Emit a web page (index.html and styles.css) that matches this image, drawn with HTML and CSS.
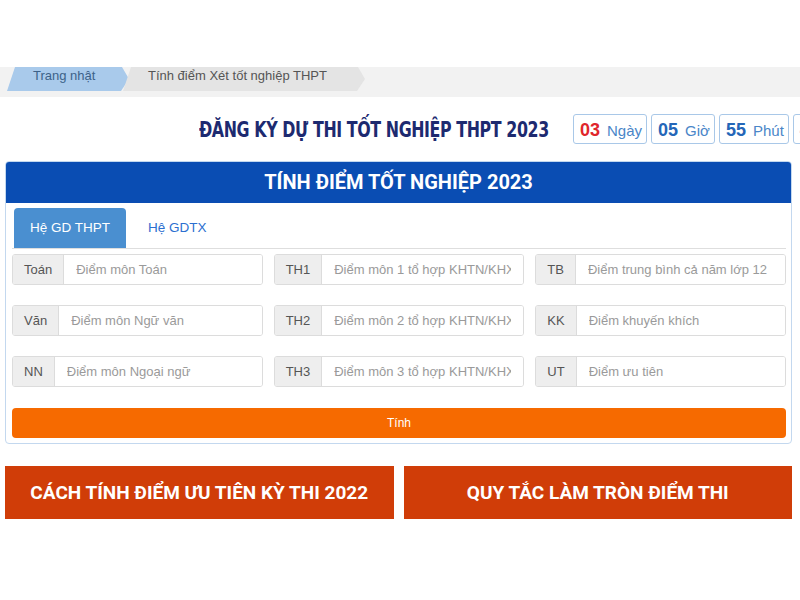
FILE: index.html
```html
<!DOCTYPE html>
<html lang="vi">
  <head>
    <meta charset="UTF-8" />
    <meta name="viewport" content="width=device-width, initial-scale=1.0" />
    <title>Tính điểm Xét tốt nghiệp THPT</title>
    <link rel="stylesheet" href="styles.css">
  </head>
  <body>
    <div class="breadcrumb">
      <a class="crumb crumb-home" href="#">Trang nhật</a>
      <a class="crumb" href="#">Tính điểm Xét tốt nghiệp THPT</a>
    </div>

    <div class="page">
      <div class="heading">
        <h2 class="heading-title">ĐĂNG KÝ DỰ THI TỐT NGHIỆP THPT 2023</h2>
        <div class="countdown">
          <span class="count-box"><b class="count-num count-red">03</b>Ngày</span>
          <span class="count-box"><b class="count-num">05</b>Giờ</span>
          <span class="count-box"><b class="count-num">55</b>Phút</span>
          <span class="count-box"><b class="count-num">42</b>Giây</span>
        </div>
      </div>

      <div class="calc-panel">
        <div class="calc-head">TÍNH ĐIỂM TỐT NGHIỆP 2023</div>

        <div class="calc-body">
          <ul class="tabs">
            <li class="tab active">Hệ GD THPT</li>
            <li class="tab">Hệ GDTX</li>
          </ul>

          <div class="score-grid">
            <div class="input-group">
              <span class="addon">Toán</span>
              <input type="text" placeholder="Điểm môn Toán">
            </div>
            <div class="input-group">
              <span class="addon">TH1</span>
              <input type="text" placeholder="Điểm môn 1 tổ hợp KHTN/KHXH">
            </div>
            <div class="input-group">
              <span class="addon">TB</span>
              <input type="text" placeholder="Điểm trung bình cả năm lớp 12">
            </div>

            <div class="input-group">
              <span class="addon">Văn</span>
              <input type="text" placeholder="Điểm môn Ngữ văn">
            </div>
            <div class="input-group">
              <span class="addon">TH2</span>
              <input type="text" placeholder="Điểm môn 2 tổ hợp KHTN/KHXH">
            </div>
            <div class="input-group">
              <span class="addon">KK</span>
              <input type="text" placeholder="Điểm khuyến khích">
            </div>

            <div class="input-group">
              <span class="addon">NN</span>
              <input type="text" placeholder="Điểm môn Ngoại ngữ">
            </div>
            <div class="input-group">
              <span class="addon">TH3</span>
              <input type="text" placeholder="Điểm môn 3 tổ hợp KHTN/KHXH">
            </div>
            <div class="input-group">
              <span class="addon">UT</span>
              <input type="text" placeholder="Điểm ưu tiên">
            </div>
          </div>

          <button class="btn-calc">Tính</button>
        </div>
      </div>

      <div class="links">
        <a class="link-btn" href="#">CÁCH TÍNH ĐIỂM ƯU TIÊN KỲ THI 2022</a>
        <a class="link-btn" href="#">QUY TẮC LÀM TRÒN ĐIỂM THI</a>
      </div>
    </div>
  </body>
</html>
```

FILE: styles.css
```css
* {
  box-sizing: border-box;
}

body {
  margin: 0;
  background-color: #fff;
  font-family: 'Liberation Sans', Arial, sans-serif;
  overflow: hidden;
}

/* breadcrumb */
.breadcrumb {
  display: flex;
  margin-top: 67px;
  height: 30px;
  background-color: #f2f2f2;
}

.crumb {
  display: block;
  height: 24px;
  padding: 1px 0 0 26px;
  font-size: 13px;
  line-height: 15px;
  color: #555;
  text-decoration: none;
  background-color: #e4e4e4;
  clip-path: polygon(8px 0, calc(100% - 7px) 0, 100% 50%, calc(100% - 8px) 100%, 0 100%);
}

.crumb-home {
  width: 122px;
  margin-left: 7px;
  color: #3d6289;
  background-color: #a9caeb;
}

.crumb + .crumb {
  width: 242px;
  margin-left: -6px;
  padding-left: 25px;
}

/* heading + countdown */
.page {
  width: 787px;
  margin-left: 5px;
}

.heading {
  display: flex;
  align-items: center;
  gap: 22px;
  height: 64px;
  padding-left: 194px;
  white-space: nowrap;
}

.heading-title {
  flex: none;
  width: 352px;
  margin: 0;
  font-family: 'DejaVu Sans Condensed', 'DejaVu Sans', sans-serif;
  font-size: 22px;
  font-weight: bold;
  color: #1d2a70;
  letter-spacing: -0.5px;
  transform: scaleX(0.8);
  transform-origin: left center;
}

.countdown {
  display: flex;
  gap: 4px;
}

.count-box {
  display: flex;
  align-items: baseline;
  height: 30px;
  padding: 5px 4px 0 6px;
  border: 1px solid #a9c8e8;
  border-radius: 3px;
  font-size: 15px;
  color: #4a86c8;
}

.count-num {
  margin-right: 7px;
  font-size: 18px;
  color: #2466b8;
}

.count-red {
  color: #e0262b;
}

/* calculator panel */
.calc-panel {
  border: 1px solid #c3d8ef;
  border-radius: 4px;
  overflow: hidden;
}

.calc-head {
  height: 41px;
  line-height: 41px;
  text-align: center;
  background-color: #0a4db3;
  color: #fff;
  font-family: Roboto, sans-serif;
  font-size: 20px;
  font-weight: bold;
}

.calc-body {
  padding: 5px 5px 5px 6px;
}

.tabs {
  display: flex;
  gap: 6px;
  margin: 0;
  padding: 0 0 0 2px;
  list-style: none;
  border-bottom: 1px solid #dedede;
}

.tab {
  height: 40px;
  line-height: 40px;
  padding: 0 16px;
  font-size: 13.5px;
  color: #2c6fd0;
  border-radius: 4px 4px 0 0;
}

.tab.active {
  background-color: #4a8fd0;
  color: #fff;
}

.score-grid {
  display: grid;
  grid-template-columns: repeat(3, 1fr);
  column-gap: 11px;
  row-gap: 20px;
  margin-top: 5px;
}

.input-group {
  display: flex;
  height: 31px;
  border: 1px solid #dcdcdc;
  border-radius: 3px;
  overflow: hidden;
}

.addon {
  padding: 0 11px;
  line-height: 29px;
  font-size: 13px;
  color: #555;
  background-color: #eee;
  border-right: 1px solid #dcdcdc;
}

.input-group input {
  flex: 1;
  min-width: 0;
  border: 0;
  padding: 0 12px;
  font-family: 'Liberation Sans', Arial, sans-serif;
  font-size: 13px;
  color: #333;
}

.input-group input::placeholder {
  color: #9a9a9a;
}

.btn-calc {
  display: block;
  width: 100%;
  height: 30px;
  margin-top: 21px;
  border: 0;
  border-radius: 4px;
  background-color: #f66a00;
  color: #fff;
  font-family: 'Liberation Sans', Arial, sans-serif;
  font-size: 12px;
}

/* bottom links */
.links {
  display: flex;
  gap: 10px;
  margin-top: 22px;
}

.link-btn {
  flex: 1;
  height: 53px;
  line-height: 53px;
  text-align: center;
  background-color: #d03d08;
  color: #fff;
  text-decoration: none;
  font-family: Roboto, sans-serif;
  font-size: 19px;
  font-weight: bold;
}
```
